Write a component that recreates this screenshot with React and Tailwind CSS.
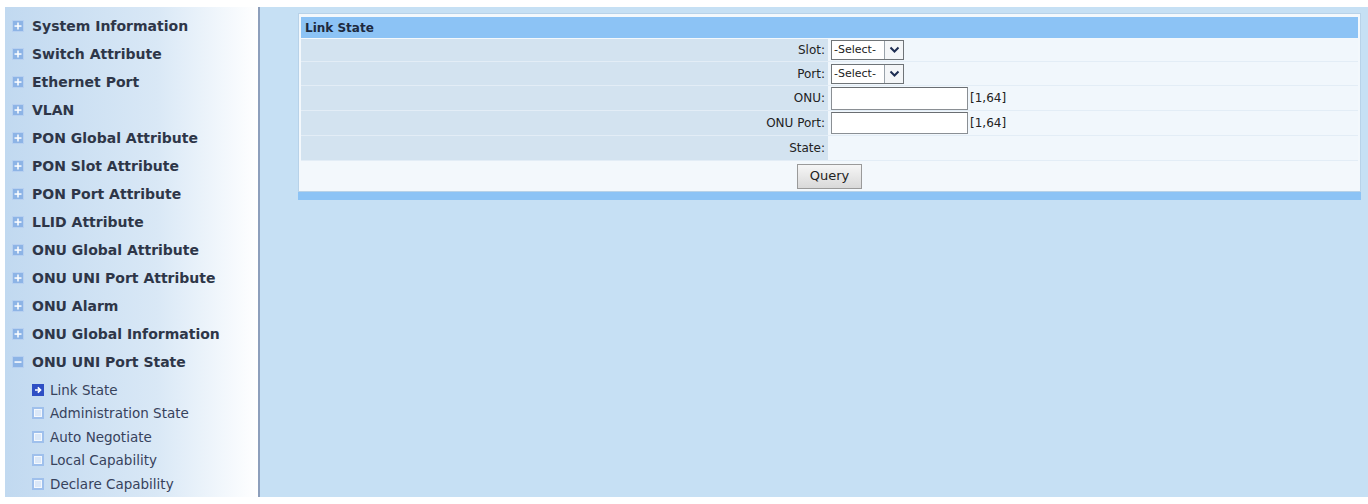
import React from "react";

const menuItems = [
  "System Information",
  "Switch Attribute",
  "Ethernet Port",
  "VLAN",
  "PON Global Attribute",
  "PON Slot Attribute",
  "PON Port Attribute",
  "LLID Attribute",
  "ONU Global Attribute",
  "ONU UNI Port Attribute",
  "ONU Alarm",
  "ONU Global Information",
];

const subItems = [
  "Link State",
  "Administration State",
  "Auto Negotiate",
  "Local Capability",
  "Declare Capability",
];

const PlusIcon = ({ minus }) => (
  <svg width="12" height="12" viewBox="0 0 12 12" className="shrink-0">
    <rect x="0.5" y="0.5" width="11" height="11" fill="#8db4e6" stroke="#b7d0f0" />
    <rect x="2.5" y="5.3" width="7" height="1.5" fill="#fff" />
    {!minus && <rect x="5.25" y="2.5" width="1.5" height="7" fill="#fff" />}
  </svg>
);

const SubIcon = ({ active }) =>
  active ? (
    <svg width="12" height="12" viewBox="0 0 12 12" className="shrink-0">
      <rect x="0" y="0" width="12" height="12" fill="#2f4fc4" />
      <path d="M3 6h5M5.8 3.3l2.7 2.7-2.7 2.7" stroke="#fff" strokeWidth="1.7" fill="none" />
    </svg>
  ) : (
    <svg width="12" height="12" viewBox="0 0 12 12" className="shrink-0">
      <rect x="0" y="0" width="12" height="12" fill="#9fc0ec" />
      <rect x="2.5" y="2.5" width="7" height="7" fill="#dbe8f8" stroke="#f4f8fd" />
    </svg>
  );

const Select = () => (
  <div className="flex h-[20px] w-[73px] border border-[#6f7478] bg-white">
    <span className="flex-1 pl-[2px] text-[11px] leading-[18px] text-[#222]">-Select-</span>
    <span className="flex w-[19px] items-center justify-center border-l border-[#9aa3ab] bg-[#f4f6f8]">
      <svg width="11" height="8" viewBox="0 0 11 8">
        <path d="M1.5 1.5l4 4 4-4" stroke="#1e2d52" strokeWidth="2" fill="none" />
      </svg>
    </span>
  </div>
);

const Field = ({ label, children, h }) => (
  <div className={`flex ${h} border-b border-[#e3edf6]`}>
    <div className="flex w-[527px] items-center justify-end bg-[#d3e3f0] pr-[3px] text-right text-[12px] leading-none text-[#222]">
      {label}
    </div>
    <div className="flex flex-1 items-center bg-[#f1f7fc] pl-[3px]">{children}</div>
  </div>
);

export default function App() {
  return (
    <div
      className="flex h-[504px] w-[1368px] bg-white pt-[7px]"
      style={{ fontFamily: '"DejaVu Sans", Verdana, sans-serif' }}
    >
      <aside className="ml-[5px] h-[490px] w-[253px] bg-gradient-to-r from-[#c1d9f0] via-[#d9e8f6] via-60% to-white pt-[5px]">
        {menuItems.map((item) => (
          <div key={item} className="flex h-[28px] items-center gap-[8px] pl-[7px]">
            <PlusIcon />
            <span className="text-[14px] font-bold text-[#2e3648]">{item}</span>
          </div>
        ))}
        <div className="flex h-[28px] items-center gap-[8px] pl-[7px]">
          <PlusIcon minus />
          <span className="text-[14px] font-bold text-[#2e3648]">ONU UNI Port State</span>
        </div>
        <div className="pt-[2px]">
          {subItems.map((item, i) => (
            <div key={item} className="flex h-[23.5px] items-center gap-[6px] pl-[27px]">
              <SubIcon active={i === 0} />
              <span className="text-[13.5px] text-[#37425c]">{item}</span>
            </div>
          ))}
        </div>
      </aside>

      <main className="h-[490px] flex-1 border-l-2 border-[#8d9fbc] bg-[#c6e0f4] pl-[38px] pr-[7px] pt-[6px]">
        <div className="border border-[#b8d2e8] bg-[#f3f8fc] px-[2px] pt-[3px]">
          <div className="flex h-[21px] items-center bg-[#8cc3f5] pl-[4px] text-[12px] font-bold text-[#1d2a3f]">
            Link State
          </div>
          <div className="mt-px">
            <Field label="Slot:" h="h-[23px]">
              <Select />
            </Field>
            <Field label="Port:" h="h-[24px]">
              <Select />
            </Field>
            <Field label="ONU:" h="h-[25px]">
              <input className="h-[23px] w-[137px] border border-[#8a8f94] border-t-[#6a6e72] bg-white" />
              <span className="ml-[2px] text-[12px] text-[#222]">[1,64]</span>
            </Field>
            <Field label="ONU Port:" h="h-[25px]">
              <input className="h-[22px] w-[137px] border border-[#8a8f94] border-t-[#6a6e72] bg-white" />
              <span className="ml-[2px] text-[12px] text-[#222]">[1,64]</span>
            </Field>
            <Field label="State:" h="h-[25px]" />
          </div>
          <div className="flex h-[30px] items-center justify-center bg-[#f3f8fc]">
            <button className="h-[25px] w-[65px] border border-[#9a9a9a] bg-gradient-to-b from-[#f6f6f6] to-[#d9d9d9] text-[13px] text-[#222]">
              Query
            </button>
          </div>
        </div>
        <div className="h-[8px] bg-[#8cc3f5]" />
      </main>
    </div>
  );
}
